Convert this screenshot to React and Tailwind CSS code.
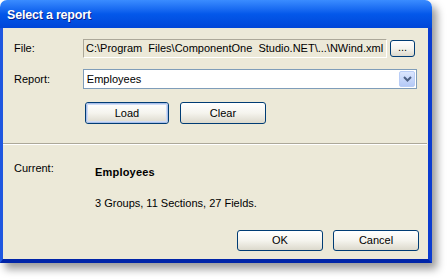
import React from "react";

const font = { fontFamily: '"Liberation Sans", Arial, sans-serif' };

function XPButton({ children, className = "", isDefault = false }) {
  return (
    <div
      className={`flex items-center justify-center rounded-[3px] border border-[#003c74] bg-gradient-to-b from-[#ffffff] via-[#f5f4ee] to-[#dcd9cc] text-[11px] text-black ${className}`}
    >
      {isDefault ? (
        <div className="flex h-full w-full items-center justify-center rounded-[2px] border border-[#a9bfe9] shadow-[inset_0_0_0_1px_#cfdcf6]">
          {children}
        </div>
      ) : (
        children
      )}
    </div>
  );
}

export default function App() {
  return (
    <div className="relative h-[279px] w-[448px] overflow-hidden bg-white" style={font}>
      <div className="flex h-[263px] w-[432px] flex-col rounded-t-[7px] shadow-[5px_6px_8px_rgba(0,0,0,0.4)]">
        {/* Title bar */}
        <div className="flex h-[28px] items-center rounded-t-[7px] bg-gradient-to-b from-[#3a8cff] via-[#0458ea] to-[#0046d8] pl-[7px] pt-[3px]">
          <span className="text-[12.5px] font-bold tracking-[-0.2px] text-white [text-shadow:1px_1px_0_#0a1e8a]">
            Select a report
          </span>
        </div>
        {/* Client */}
        <div className="flex flex-1 flex-col border-b-[4px] border-l-[3px] border-r-[4px] border-b-[#0024a8] border-l-[#1f57e0] border-r-[#0a3bd0] bg-[#ece9d8] text-[11px] text-black">
          <div className="px-[11px] pt-[11px]">
            {/* File row */}
            <div className="flex h-[19px] items-center">
              <div className="w-[69px]">File:</div>
              <div className="flex h-[19px] w-[304px] items-center border border-b-white border-l-[#aca899] border-r-white border-t-[#aca899] pl-[2px] whitespace-pre">
                {"C:\\Program  Files\\ComponentOne  Studio.NET\\...\\NWind.xml"}
              </div>
              <XPButton className="ml-[3px] h-[17px] w-[25px] leading-none">
                <span className="-mt-[2px]">...</span>
              </XPButton>
            </div>
            {/* Report row */}
            <div className="mt-[11px] flex h-[20px] items-center">
              <div className="w-[69px]">Report:</div>
              <div className="flex h-[20px] w-[335px] items-center justify-between border border-[#7f9db9] bg-white pl-[3px]">
                <span>Employees</span>
                <div className="m-[1px] flex h-[16px] w-[16px] items-center justify-center rounded-[2px] border border-[#b9cdf6] bg-gradient-to-b from-[#dbe6fe] to-[#b4c9f6]">
                  <svg width="9" height="6" viewBox="0 0 9 6">
                    <path d="M1 1 L4.5 4.5 L8 1" fill="none" stroke="#4d6185" strokeWidth="2" />
                  </svg>
                </div>
              </div>
            </div>
            {/* Load / Clear */}
            <div className="mt-[13px] flex pl-[71px]">
              <XPButton isDefault className="h-[22px] w-[84px]">
                Load
              </XPButton>
              <XPButton className="ml-[11px] h-[22px] w-[86px]">Clear</XPButton>
            </div>
          </div>
          {/* Separator */}
          <div className="mt-[19px] mr-[1px] h-px bg-[#aca899]" />
          <div className="mr-[1px] h-px bg-white" />
          {/* Current */}
          <div className="mt-[17px] flex px-[11px]">
            <div className="w-[81px] leading-[13px]">Current:</div>
            <div className="flex flex-col">
              <div className="pt-[4px] font-bold leading-[13px] tracking-[0.2px]">Employees</div>
              <div className="mt-[18px] leading-[13px]">3 Groups, 11 Sections, 27 Fields.</div>
            </div>
          </div>
          <div className="mt-[20px] flex justify-end pr-[9px]">
            <XPButton className="h-[21px] w-[86px]">OK</XPButton>
            <XPButton className="ml-[10px] h-[21px] w-[86px]">Cancel</XPButton>
          </div>
        </div>
      </div>
    </div>
  );
}
